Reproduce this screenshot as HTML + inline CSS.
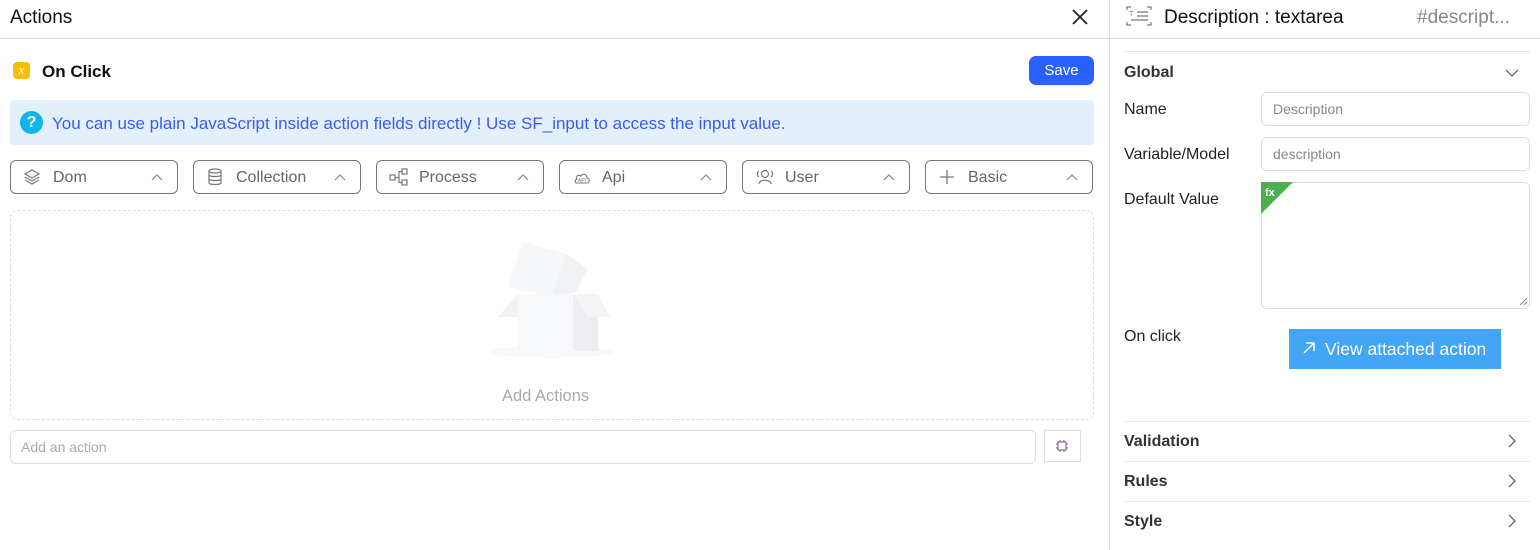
<!DOCTYPE html>
<html><head><style>
*{box-sizing:border-box;margin:0;padding:0}
body{width:1540px;height:550px;background:#fff;font-family:"Liberation Sans",sans-serif;position:relative;overflow:hidden;color:#222}
.a{position:absolute}
.btn{position:absolute;top:160px;width:168px;height:34px;border:1px solid #777;border-radius:6px;color:#666;font-size:16px}
.btn .ic{position:absolute;left:12px;top:7px}
.btn .t{position:absolute;left:42px;top:8px}
.btn .ch{position:absolute;right:14px;top:12px}
.lbl{position:absolute;left:1124px;font-size:16px;color:#222}
.inp{position:absolute;left:1261px;width:269px;height:34px;border:1px solid #ddd;border-radius:6px;font-size:14px;color:#888;padding:8px 11px}
.sec{position:absolute;left:1124px;width:406px;border-top:1px solid #e6e6e6;font-size:16px;font-weight:bold;color:#333;height:40px;padding-top:11px}
.sec svg{position:absolute;right:14px;top:12px}
</style></head><body>
<div class="a" style="left:10px;top:7px;font-size:19px;color:#111">Actions</div>
<svg class="a" style="left:1071px;top:8px" width="18" height="18" viewBox="0 0 18 18"><path d="M2 2L16 16M16 2L2 16" stroke="#222" stroke-width="1.8"/></svg>
<div class="a" style="left:0;top:38px;width:1110px;height:1px;background:#ddd"></div>
<div class="a" style="left:1109px;top:0;width:1px;height:550px;background:#ddd"></div>
<div class="a" style="left:13px;top:62px;width:17px;height:17px;background:#fbbc05;border-radius:4px;color:#fff;font-style:italic;font-size:13px;text-align:center;line-height:16px;font-family:'Liberation Serif',serif">x</div>
<div class="a" style="left:42px;top:62px;font-size:17px;font-weight:bold;color:#111">On Click</div>
<div class="a" style="left:1029px;top:56px;width:65px;height:29px;background:#2962ff;border-radius:7px;color:#fff;font-size:15px;text-align:center;line-height:30px">Save</div>
<div class="a" style="left:10px;top:100px;width:1084px;height:45px;background:#e3f0fc;border-radius:4px"></div>
<div class="a" style="left:20px;top:111px;width:23px;height:23px;border-radius:50%;background:#12b4ec;color:#fff;font-weight:bold;font-size:16px;text-align:center;line-height:23px">?</div>
<div class="a" style="left:52px;top:114px;font-size:17px;color:#3a5bf0">You can use plain JavaScript inside action fields directly ! Use SF_input to access the input value.</div>

<div class="btn" style="left:10px"><svg class="ic" width="18" height="18" viewBox="0 0 18 18" fill="none" stroke="#777" stroke-width="1.2"><path d="M9 2L16 6 9 10 2 6Z"/><path d="M2 9L9 13 16 9"/><path d="M2 12L9 16 16 12"/></svg><span class="t">Dom</span><svg class="ch" width="12" height="8"><path d="M1 7L6 2 11 7" fill="none" stroke="#888" stroke-width="1.2"/></svg></div>
<div class="btn" style="left:193px"><svg class="ic" width="18" height="18" viewBox="0 0 18 18" fill="none" stroke="#777" stroke-width="1.2"><ellipse cx="9" cy="3" rx="6" ry="2"/><path d="M3 3V15C3 17 15 17 15 15V3M3 7C3 9 15 9 15 7M3 11C3 13 15 13 15 11"/></svg><span class="t">Collection</span><svg class="ch" width="12" height="8"><path d="M1 7L6 2 11 7" fill="none" stroke="#888" stroke-width="1.2"/></svg></div>
<div class="btn" style="left:376px"><svg class="ic" width="20" height="18" viewBox="0 0 20 18" fill="none" stroke="#777" stroke-width="1.2"><rect x="1" y="7" width="5" height="5"/><rect x="13" y="1" width="5" height="5"/><rect x="13" y="12" width="5" height="5"/><path d="M6 9.5H10V3.5H13M10 9.5V14.5H13"/></svg><span class="t">Process</span><svg class="ch" width="12" height="8"><path d="M1 7L6 2 11 7" fill="none" stroke="#888" stroke-width="1.2"/></svg></div>
<div class="btn" style="left:559px"><svg class="ic" width="20" height="18" viewBox="0 0 20 18" fill="none" stroke="#777" stroke-width="1.1"><path d="M5 15H15C18 15 18 10 15 10 15 6 10 5 9 8 6 6 3 9 5 11 2 12 3 15 5 15Z"/><text x="6" y="14" font-size="5" fill="#777" stroke="none">API</text></svg><span class="t">Api</span><svg class="ch" width="12" height="8"><path d="M1 7L6 2 11 7" fill="none" stroke="#888" stroke-width="1.2"/></svg></div>
<div class="btn" style="left:742px"><svg class="ic" width="20" height="18" viewBox="0 0 20 18" fill="none" stroke="#777" stroke-width="1.2"><circle cx="10" cy="6" r="3.5"/><path d="M4 16C4 11 16 11 16 16"/><path d="M4 3C2 4 2 8 4 9M16 3C18 4 18 8 16 9"/></svg><span class="t">User</span><svg class="ch" width="12" height="8"><path d="M1 7L6 2 11 7" fill="none" stroke="#888" stroke-width="1.2"/></svg></div>
<div class="btn" style="left:925px"><svg class="ic" width="18" height="18" viewBox="0 0 18 18"><path d="M9 2V16M2 9H16" stroke="#777" stroke-width="1.3"/></svg><span class="t">Basic</span><svg class="ch" width="12" height="8"><path d="M1 7L6 2 11 7" fill="none" stroke="#888" stroke-width="1.2"/></svg></div>

<div class="a" style="left:10px;top:210px;width:1084px;height:210px;border:1px dashed #ddd;border-radius:8px"></div>
<svg class="a" style="left:488px;top:232px" width="126" height="130" viewBox="0 0 126 130">
<ellipse cx="63" cy="120" rx="62" ry="6" fill="#f7f8fa"/>
<path d="M20 55L35 10 78 22 63 65Z" fill="#f6f7f9"/>
<path d="M78 22L100 37 88 60 63 65Z" fill="#f1f2f4"/>
<path d="M30 62H85V119H30Z" fill="#f7f8f9"/>
<path d="M85 62H110V119H85Z" fill="#eeeef1"/>
<path d="M85 62L110 62 122 85 100 85Z" fill="#f4f4f6"/>
<path d="M30 62L10 85 30 85Z" fill="#f2f2f4"/>
</svg>
<div class="a" style="left:502px;top:387px;font-size:16.5px;color:#aaa">Add Actions</div>
<div class="a" style="left:10px;top:430px;width:1026px;height:34px;border:1px solid #ddd;border-radius:6px;font-size:14px;color:#aaa;padding:8px 10px">Add an action</div>
<div class="a" style="left:1044px;top:430px;width:37px;height:32px;border:1px solid #ddd"></div>
<svg class="a" style="left:1055px;top:439px" width="14" height="14" viewBox="0 0 14 14" fill="none" stroke="#8a6a9a" stroke-width="1.2"><rect x="3" y="3" width="8" height="8"/><path d="M5 1V3M9 1V3M5 11V13M9 11V13M1 5H3M1 9H3M11 5H13M11 9H13"/></svg>

<svg class="a" style="left:1126px;top:6px" width="26" height="20" viewBox="0 0 26 20" fill="none" stroke="#777" stroke-width="1.2"><path d="M1 4V1H5M21 1H25V4M1 16V19H5M21 19H25V16"/><path d="M11 6H22M11 10H22M5 14H22" /><text x="3" y="10" font-size="7" fill="#e55" stroke="none">T</text></svg>
<div class="a" style="left:1164px;top:7px;font-size:19px;color:#111">Description : textarea</div>
<div class="a" style="left:1417px;top:7px;font-size:19px;color:#888">#descript...</div>
<div class="a" style="left:1110px;top:38px;width:430px;height:1px;background:#ddd"></div>
<div class="a" style="left:1124px;top:51px;width:406px;height:1px;background:#e6e6e6"></div>
<div class="a" style="left:1124px;top:64px;font-size:16px;font-weight:bold;color:#333">Global</div>
<svg class="a" style="left:1505px;top:69px" width="14" height="8"><path d="M1 1L7 7 13 1" fill="none" stroke="#555" stroke-width="1.2"/></svg>
<div class="lbl" style="top:101px">Name</div>
<div class="inp" style="top:92px">Description</div>
<div class="lbl" style="top:146px">Variable/Model</div>
<div class="inp" style="top:137px">description</div>
<div class="lbl" style="top:191px">Default Value</div>
<div class="inp" style="top:182px;height:127px;padding:0"></div>
<svg class="a" style="left:1261px;top:182px" width="32" height="32"><path d="M0 0H32L0 32Z" fill="#4caf50"/><text x="4" y="14" font-size="11" fill="#fff" font-weight="bold" font-family="Liberation Sans">fx</text></svg>
<svg class="a" style="left:1519px;top:297px" width="9" height="9"><path d="M1 8L8 1M5 8L8 5" stroke="#888"/></svg>
<div class="lbl" style="top:328px">On click</div>
<div class="a" style="left:1289px;top:329px;width:212px;height:40px;background:#42a5f5;color:#fff;font-size:17.5px;line-height:40px;padding-left:36px">View attached action</div>
<svg class="a" style="left:1302px;top:341px" width="14" height="14"><path d="M2 12L12 2M4 2H12V10" fill="none" stroke="#fff" stroke-width="1.5"/></svg>
<div class="sec" style="top:421px">Validation<svg width="8" height="14"><path d="M1 1L7 7 1 13" fill="none" stroke="#555" stroke-width="1.2"/></svg></div>
<div class="sec" style="top:461px">Rules<svg width="8" height="14"><path d="M1 1L7 7 1 13" fill="none" stroke="#555" stroke-width="1.2"/></svg></div>
<div class="sec" style="top:501px">Style<svg width="8" height="14"><path d="M1 1L7 7 1 13" fill="none" stroke="#555" stroke-width="1.2"/></svg></div>
</body></html>
